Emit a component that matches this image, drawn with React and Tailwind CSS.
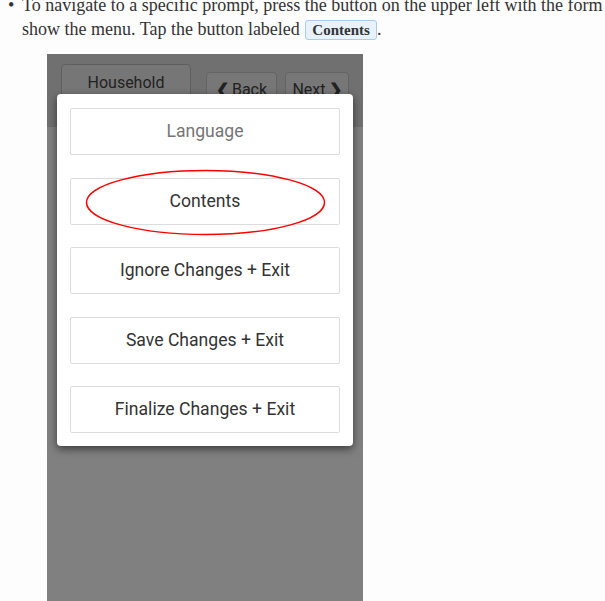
import React from "react";

const serif = { fontFamily: '"Liberation Serif", "DejaVu Serif", serif' };

function MenuButton({ children, muted }) {
  return (
    <div
      className={`h-[47px] flex items-center justify-center border border-[#dcdcdc] rounded-[2px] bg-white text-[17.6px] ${
        muted ? "text-[#757575]" : "text-[#333]"
      }`}
    >
      {children}
    </div>
  );
}

export default function App() {
  return (
    <div className="w-[605px] h-[601px] overflow-hidden bg-[#fdfdfd] relative">
      <div
        className="relative -mt-[7px] pl-[22px] text-[18px] leading-[24px] text-[#333]"
        style={serif}
      >
        <span className="absolute left-[8px] top-[0px]">•</span>
        <div className="whitespace-nowrap">
          To navigate to a specific prompt, press the button on the upper left with the form n
        </div>
        <div className="whitespace-nowrap">
          show the menu. Tap the button labeled{" "}
          <span className="inline-block ml-[1px] px-[6px] leading-[18px] text-[15px] font-bold border border-[#a9cdee] bg-[#e8f2fc] rounded-[3px]">
            Contents
          </span>
          .
        </div>
      </div>

      <div
        className="ml-[47px] mt-[13px] w-[316px] h-[560px] bg-[#808080] flex flex-col"
        style={{ fontFamily: 'Roboto, "Noto Sans", sans-serif' }}
      >
        <div className="h-[73px] bg-[#707070] flex items-start px-[14px] pt-[10px] gap-[15px]">
          <div className="w-[130px] h-[40px] rounded-t-[4px] border border-[#5f5f5f] bg-[#767676] flex justify-center pt-[6px] text-[16px] text-[#222]">
            Household
          </div>
          <div className="flex gap-[8px] mt-[8px]">
            <div className="w-[71px] h-[30px] rounded-[4px] border border-[#646464] bg-[#777] flex justify-center pt-[5px] text-[16px] text-[#222] items-start">
              <span className="font-bold mr-[3px]">❮</span>Back
            </div>
            <div className="w-[64px] h-[30px] rounded-[4px] border border-[#646464] bg-[#777] flex justify-center pt-[5px] text-[16px] text-[#222] items-start">
              Next<span className="font-bold ml-[3px]">❯</span>
            </div>
          </div>
        </div>
      </div>

      <div className="absolute left-[57px] top-[94px] w-[296px] h-[352px] bg-white rounded-[4px] shadow-[0_3px_8px_rgba(0,0,0,0.55)] px-[13px] pt-[14px] flex flex-col gap-[22.5px]" style={{ fontFamily: 'Roboto, "Noto Sans", sans-serif' }}>
        <MenuButton muted>Language</MenuButton>
        <MenuButton>Contents</MenuButton>
        <MenuButton>Ignore Changes + Exit</MenuButton>
        <MenuButton>Save Changes + Exit</MenuButton>
        <MenuButton>Finalize Changes + Exit</MenuButton>
      </div>

      <svg className="absolute left-0 top-0" width="605" height="601">
        <ellipse cx="205.5" cy="202.5" rx="119" ry="32" fill="none" stroke="#f00" strokeWidth="1.5" />
      </svg>
    </div>
  );
}
